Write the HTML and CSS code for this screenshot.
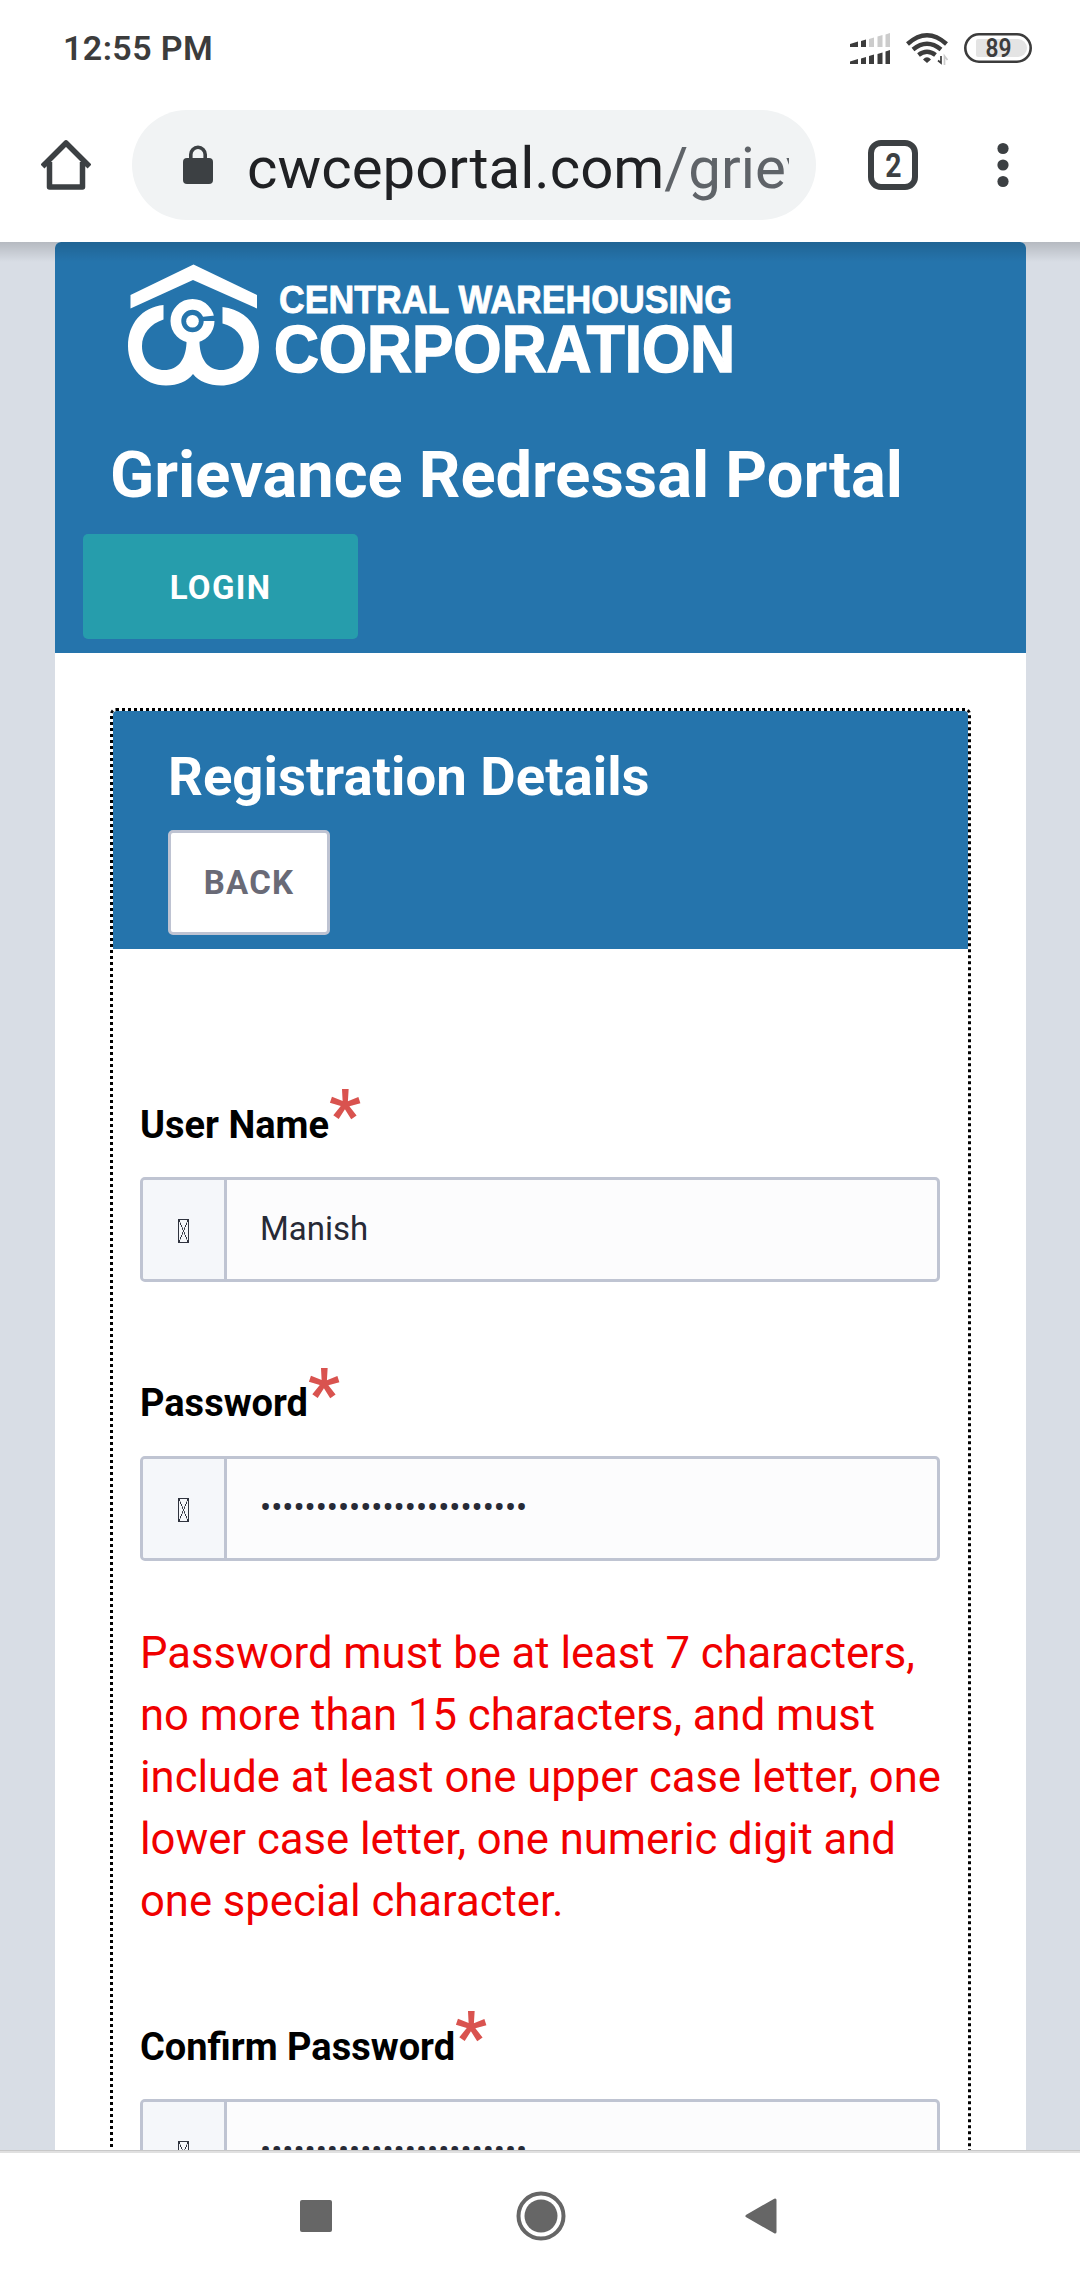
FILE: index.html
```html
<!DOCTYPE html>
<html lang="en">
<head>
<meta charset="utf-8">
<title>Grievance Redressal Portal</title>
<link rel="stylesheet" href="styles.css">
</head>
<body>
<div class="screen">
  <div class="status">
    <span class="clock">12:55 PM</span>
    <svg class="status-icons" width="184" height="34" viewBox="848 30 184 34">
      <g fill="#3c3c3c">
        <path d="M850 43l8-2.500v5.500h-8zM861 40l5-1.500v7.500h-5z"/>
        <path d="M850 60.500l8-2.500v5h-8zM861 57.500l5-1.500v7h-5zM869 55l5-1.500v9.500h-5zM877.500 53l5-1.500v11.500h-5zM885.500 50.500l4.500-1.500v14h-4.500z"/>
        <path d="M927 62l-4-3.500q4-4.500 8 0z"/>
      </g>
      <path fill="#ccc" d="M869 38l5-1.500v9.500h-5zM877.500 35.500l5-1.500v12h-5zM885.500 33.500l4.500-1.500v14h-4.500z"/>
      <g fill="none" stroke="#3c3c3c" stroke-width="4.400">
        <path d="M907.500 43q19.500-17.500 39 0M913 48.500q14-11.500 28 0M918.500 54q8.500-6.500 17 0"/>
      </g>
      <path d="M938 59.500l3 2.500V55" fill="none" stroke="#3c3c3c" stroke-width="1.700"/>
      <path d="M944.500 64v-9l3 4" fill="none" stroke="#ccc" stroke-width="1.700"/>
      <path d="M978 38h40a9 9 0 0 1 0 18h-40q-2 0-2-2V40q0-2 2-2z" fill="#e4e4e4"/>
      <rect x="965.300" y="33.300" width="65.400" height="27.400" rx="13.700" fill="none" stroke="#3c3c3c" stroke-width="2.600"/>
      <text class="battery" x="985.500" y="55.700" textLength="26" lengthAdjust="spacingAndGlyphs">89</text>
    </svg>
  </div>
  <div class="toolbar">
    <svg class="home" width="50" height="50" viewBox="0 0 50 50" fill="none" stroke="#3c4043" stroke-width="5.500" stroke-linejoin="round">
      <path d="M1.500 26.500L25 3l23.500 23.500M8.500 22v25h33V22"/>
    </svg>
    <div class="omnibox">
      <svg class="lock" width="30" height="39" viewBox="0 0 30 39"><rect y="13" width="30" height="26" rx="4" fill="#3c4043"/><path d="M7.800 15V9.500a7.200 7.200 0 0 1 14.400 0V15" fill="none" stroke="#3c4043" stroke-width="3.600"/></svg>
      <div class="url">cwceportal.com<span>/griev</span></div>
    </div>
    <div class="tabs"><span>2</span></div>
    <svg class="dots" width="12" height="46" viewBox="0 0 12 46" fill="#3c4043"><circle cx="6" cy="6.500" r="5.600"/><circle cx="6" cy="23" r="5.600"/><circle cx="6" cy="39.500" r="5.600"/></svg>
  </div>
  <main class="page">
    <div class="sheet">
      <header class="masthead">
        <svg class="logo" width="620" height="130" viewBox="120 260 620 130" fill="#fff">
          <path d="M193.500 264.500L257 295v13.500L193 280l-62.500 28.500V295z"/>
          <path d="M163.500 305C142 307 128 324 128 346c0 22 16 39.500 38 39.500 12 0 21-4 27-11.500 6 7.500 16 11.500 28 11.500 22 0 38-17 38-38.500 0-22-14-37-36.500-40v16.500c13 3 21 13 21 24 0 13-9 22.500-22 22.500-13 0-21-9.500-22-26.500v-6h-13v6c-1 17-9 26.500-22 26.500-13 0-22.500-9.500-22.500-24 0-12 8-22 21.500-26.500z"/>
          <circle cx="192.500" cy="321" r="16.600" fill="none" stroke="#fff" stroke-width="10.800"/>
          <path d="M201 317l14-1.500v5.500h-14z" fill="#2574ac"/>
          <circle cx="192.500" cy="321.300" r="6.300"/>
          <text class="logo-top" x="279" y="313" textLength="453" lengthAdjust="spacingAndGlyphs">CENTRAL WAREHOUSING</text>
          <text class="logo-bottom" x="274" y="372" textLength="461" lengthAdjust="spacingAndGlyphs">CORPORATION</text>
        </svg>
        <h1>Grievance Redressal Portal</h1>
        <button class="login">LOGIN</button>
      </header>
      <section class="portlet">
        <div class="portlet-title">
          <h2>Registration Details</h2>
          <button class="back">BACK</button>
        </div>
        <form class="form">
          <div class="group first">
            <label>User Name<span class="required">*</span></label>
            <div class="field"><span class="addon"><i class="tofu"></i></span><span class="value">Manish</span></div>
          </div>
          <div class="group">
            <label>Password<span class="required">*</span></label>
            <div class="field"><span class="addon"><i class="tofu"></i></span><span class="value">••••••••••••••••••••••••</span></div>
          </div>
          <p class="hint">Password must be at least 7 characters,<br>no more than 15 characters, and must<br>include at least one upper case letter, one<br>lower case letter, one numeric digit and<br>one special character.</p>
          <div class="group last">
            <label>Confirm Password<span class="required">*</span></label>
            <div class="field"><span class="addon"><i class="tofu"></i></span><span class="value">••••••••••••••••••••••••</span></div>
          </div>
        </form>
      </section>
    </div>
  </main>
  <nav class="navbar">
    <svg width="32" height="32"><rect width="32" height="32" rx="2" fill="#666"/></svg>
    <svg width="50" height="50" viewBox="0 0 50 50"><circle cx="25" cy="25" r="22.500" fill="none" stroke="#666" stroke-width="4"/><circle cx="25" cy="25" r="16.500" fill="#666"/></svg>
    <svg width="32" height="36" viewBox="0 0 32 36"><path d="M2 18L30 2v32z" fill="#666" stroke="#666" stroke-width="3" stroke-linejoin="round"/></svg>
  </nav>
</div>
</body>
</html>
```
FILE: styles.css
```css
* { box-sizing: border-box; }
body { margin: 0; font-family: Roboto, sans-serif; background: #fff; }
h1, h2, p { margin: 0; }
button { font-family: inherit; padding: 0; display: block; }
svg { display: block; flex: none; }

.screen { width: 1080px; height: 2280px; display: flex; flex-direction: column; overflow: hidden; }

.status { height: 96px; display: flex; align-items: center; justify-content: space-between; padding: 0 48px 0 63px; flex: none; }
.clock { font-size: 34px; font-weight: 600; color: #3c3c3c; letter-spacing: 0.4px; }
.battery { font: 600 25px Roboto, sans-serif; fill: #3c3c3c; }

.toolbar { height: 146px; display: flex; align-items: center; padding: 0 0 8px 41px; flex: none; }
.omnibox { width: 684px; height: 110px; margin-left: 41px; border-radius: 55px; background: #f1f3f4; display: flex; align-items: center; padding: 0 27px 0 51px; }
.lock { margin-top: -2px; }
.url { margin-left: 34px; padding-top: 5px; flex: 1; overflow: hidden; white-space: nowrap; font-size: 58.200px; line-height: 80px; color: #202124; }
.url span { color: #5f6368; }
.tabs { width: 50px; height: 50px; margin-left: 52px; border: 6px solid #3c4043; border-radius: 13px; color: #3c4043; font-size: 33px; font-weight: 700; line-height: 39px; text-align: center; }
.tabs span { display: inline-block; transform: scaleX(.86); }
.dots { margin-left: 79px; }

.page { height: 1908px; flex: none; overflow: hidden; background: linear-gradient(rgba(0,0,0,.16), rgba(0,0,0,0) 20px), #d8dde5; padding: 0 54px 0 55px; }
.sheet { background: #fff; border-radius: 6px 6px 0 0; height: 100%; display: flex; flex-direction: column; }
.masthead { height: 411px; flex: none; background: linear-gradient(rgba(0,0,0,.14), rgba(0,0,0,0) 20px), #2574ac; border-radius: 6px 6px 0 0; padding: 18px 28px 0; }
.logo { margin-left: 37px; }
.logo-top { font: 700 38px "Liberation Sans", sans-serif; stroke: #fff; stroke-width: .8px; }
.logo-bottom { font: 700 67px "Liberation Sans", sans-serif; stroke: #fff; stroke-width: 1.600px; }
h1 { margin: 47px 0 0 27px; font-size: 65px; line-height: 77px; font-weight: 700; color: #fff; white-space: nowrap; }
.login { width: 275px; height: 105px; margin-top: 20px; border: 0; border-radius: 5px; background: #269dac; color: #fff; font-size: 33px; font-weight: 700; letter-spacing: 1.300px; padding-top: 2px; }

.portlet { flex: none; height: 1500px; margin: 55px 55px 0; border: 3px dotted #000; border-radius: 6px; }
.portlet-title { height: 238px; background: #2574ac; border-radius: 4px 4px 0 0; padding: 30px 0 0 55px; }
h2 { font-size: 54.500px; line-height: 70px; font-weight: 700; color: #fff; white-space: nowrap; }
.back { width: 162px; height: 105px; margin-top: 19px; background: #fff; border: 3px solid #bec3d2; border-radius: 5px; color: #696a76; font-size: 33px; font-weight: 700; letter-spacing: 1.300px; }

.form { padding: 0 28px 0 27px; }
.group { height: 279px; }
.first { margin-top: 141px; }
label { display: flex; height: 87px; font-size: 38px; font-weight: 700; line-height: 69px; color: #000; }
.first label, .last label { line-height: 71px; }
label .required { font-size: 70px; line-height: 51px; font-weight: 700; color: #d9534f; }
.field { display: flex; height: 105px; border: 3px solid #bfc4d2; border-radius: 5px; background: #fcfcfd; overflow: hidden; }
.addon { width: 84px; border-right: 3px solid #bfc4d2; background: #f5f7fa; display: flex; align-items: center; justify-content: center; padding-top: 3px; }
.tofu { width: 11px; height: 24px; border: 1px solid #30343f; background: linear-gradient(to top right, transparent 47%, #30343f 48%, #30343f 52%, transparent 53%), linear-gradient(to bottom right, transparent 47%, #30343f 48%, #30343f 52%, transparent 53%); }
.value { padding-left: 33px; font-size: 33px; line-height: 97px; color: #272a36; }
.hint { margin: -25px 0 0; font-size: 43.600px; line-height: 61.900px; color: #f00000; white-space: nowrap; }
.last { margin-top: 79px; }

.navbar { height: 130px; flex: none; border-top: 1px solid #c8c8c8; box-shadow: inset 0 2px #e0e0e0; display: flex; align-items: center; padding-left: 300px; }
.navbar svg:nth-child(2) { margin-left: 184px; }
.navbar svg:nth-child(3) { margin-left: 179px; }
```
